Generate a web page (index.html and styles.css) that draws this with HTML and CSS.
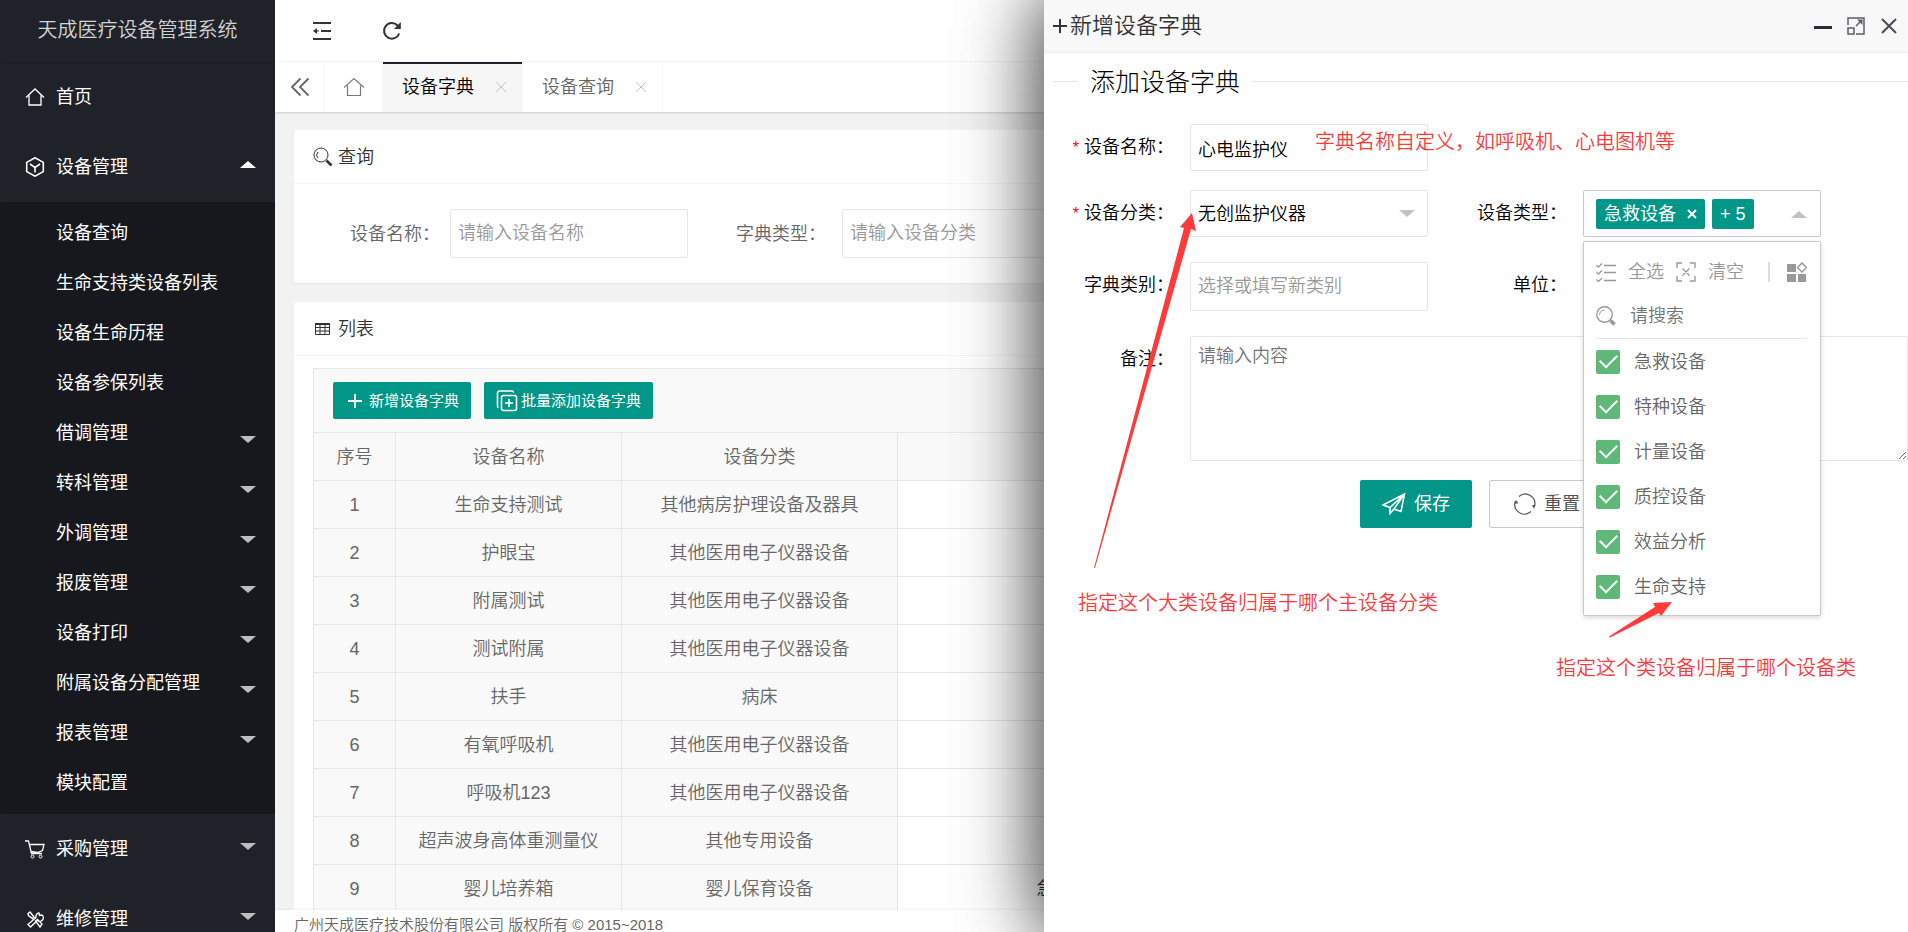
FILE: index.html
```html
<!DOCTYPE html>
<html lang="zh-CN">
<head>
    <meta charset="UTF-8">
    <meta name="viewport" content="width=device-width, initial-scale=1.0">
    <title>天成医疗设备管理系统</title>
    <link rel="stylesheet" href="styles.css">
</head>
<body>
    <aside class="side">
        <div class="logo">天成医疗设备管理系统</div>
        <nav>
            <a class="nav-item" href="#">
                <svg class="nav-icon" viewBox="0 0 20 20"><path d="M1 10.500 10 2l9 8.500M4 8.500V18h12V8.500" stroke-width="1.300"/></svg>
                首页
            </a>
            <a class="nav-item" href="#">
                <svg class="nav-icon" viewBox="0 0 20 20"><path d="M10 .8l8.300 4.600v9.200L10 19.200l-8.300-4.600V5.400zM5 7l5 3.500L15 7M10 10.500V15.500" stroke-width="1.600"/></svg>
                设备管理
                <i class="caret caret-up"></i>
            </a>
            <div class="sub-nav">
                <a href="#">设备查询</a>
                <a href="#">生命支持类设备列表</a>
                <a href="#">设备生命历程</a>
                <a href="#">设备参保列表</a>
                <a href="#">借调管理<i class="caret"></i></a>
                <a href="#">转科管理<i class="caret"></i></a>
                <a href="#">外调管理<i class="caret"></i></a>
                <a href="#">报废管理<i class="caret"></i></a>
                <a href="#">设备打印<i class="caret"></i></a>
                <a href="#">附属设备分配管理<i class="caret"></i></a>
                <a href="#">报表管理<i class="caret"></i></a>
                <a href="#">模块配置</a>
            </div>
            <a class="nav-item" href="#">
                <svg class="nav-icon" viewBox="0 0 20 20"><path d="M0 2h3.500l3 12.500H17M4.500 5.500H19l-1.500 6-5 2-6.300-1" stroke-width="1.300"/><circle cx="7.500" cy="17.500" r="1.500"/><circle cx="15.500" cy="17.500" r="1.500"/></svg>
                采购管理
                <i class="caret"></i>
            </a>
            <a class="nav-item" href="#">
                <svg class="nav-icon" viewBox="0 0 20 20"><path d="M3 4.500l2-1.500 4 5-1.500 1.500L3.500 6.500zM10.500 12l2-1.500 4.500 4.500-2 3zM17 6l-2.500.5L14 4a3.500 3.500 0 0 0-3 4.500L3 15.500l2.500 2.500L12.500 11.500a3.500 3.500 0 0 0 4.500-5.500z" stroke-width="1.400"/></svg>
                维修管理
                <i class="caret"></i>
            </a>
        </nav>
    </aside>

    <main class="main">
        <header class="topbar">
            <button type="button" aria-label="收起菜单">
                <svg width="20" height="20" viewBox="0 0 20 20"><path d="M1 2h18M9 10h10M1 18h18" stroke-width="2"/><path d="M1 10l4-3v6z" fill="#333" stroke="none"/><path d="M5 10h2" /></svg>
            </button>
            <button type="button" aria-label="刷新">
                <svg width="20" height="20" viewBox="0 0 20 20"><path d="M17.200 12.500A7.800 7.800 0 1 1 15.500 4.500L17 6" stroke-width="2"/><path d="M18.800 1V8H12z" fill="#333" stroke="none"/></svg>
            </button>
        </header>
        <div class="tabs">
            <button type="button" class="tab-prev" aria-label="向左">
                <svg width="20" height="20" viewBox="0 0 20 20"><path d="M10.500 1.500 2 10l8.500 8.500M18.500 1.500 10 10l8.500 8.500" stroke-width="1.800"/></svg>
            </button>
            <a class="tab-home" href="#" aria-label="首页">
                <svg width="20" height="20" viewBox="0 0 20 20"><path d="M0 10.500 10 1.500l10 9M3.500 8.500v10h13v-10" stroke="#777" stroke-width="1.200"/></svg>
            </a>
            <a class="tab active" href="#">设备字典
                <svg width="12" height="12" viewBox="0 0 12 12"><path d="M1 1l10 10M11 1 1 11"/></svg>
            </a>
            <a class="tab" href="#">设备查询
                <svg width="12" height="12" viewBox="0 0 12 12"><path d="M1 1l10 10M11 1 1 11"/></svg>
            </a>
        </div>

        <div class="content">
            <section class="card">
                <h2 class="card-title">
                    <svg width="20" height="20" viewBox="0 0 20 20"><circle cx="8" cy="8" r="7"/><path d="M4.500 11A5 5 0 0 1 5 5"/><path d="M13.500 13.500l5 5" stroke-width="2.600"/></svg>
                    查询
                </h2>
                <form class="search">
                    <label for="q-name">设备名称：</label>
                    <input id="q-name" type="text" placeholder="请输入设备名称">
                    <label for="q-type" class="next">字典类型：</label>
                    <input id="q-type" type="text" placeholder="请输入设备分类">
                </form>
            </section>

            <section class="card">
                <h2 class="card-title">
                    <svg width="20" height="20" viewBox="0 0 20 20"><path d="M2.500 4.500h14v11h-14zM2.500 8.500h14M2.500 12h14M7 5v10.500M12 5v10.500"/><path d="M2 5h15" stroke-width="2"/></svg>
                    列表
                </h2>
                <div class="table-box">
                    <div class="toolbar">
                        <button type="button" class="btn-small">
                            <svg width="16" height="16" viewBox="0 0 16 16"><path d="M8 1v14M1 8h14" stroke-width="2"/></svg>
                            新增设备字典
                        </button>
                        <button type="button" class="btn-small">
                            <svg width="22" height="22" viewBox="0 0 22 22"><rect x="5.500" y="5.500" width="15" height="15" rx="2" stroke-width="1.600"/><path d="M2.500 17.500a1.500 1.500 0 0 1-1-1.500V3a2 2 0 0 1 2-2H16a1.500 1.500 0 0 1 1.500 1.500M13 9v8M9 13h8" stroke-width="1.600"/></svg>
                            批量添加设备字典
                        </button>
                    </div>
                    <table>
                        <colgroup>
                            <col class="c-no"><col class="c-name"><col class="c-cate"><col class="c-type">
                        </colgroup>
                        <thead>
                            <tr><th>序号</th><th>设备名称</th><th>设备分类</th><th></th></tr>
                        </thead>
                        <tbody>
                            <tr><td>1</td><td>生命支持测试</td><td>其他病房护理设备及器具</td><td></td></tr>
                            <tr><td>2</td><td>护眼宝</td><td>其他医用电子仪器设备</td><td></td></tr>
                            <tr><td>3</td><td>附属测试</td><td>其他医用电子仪器设备</td><td></td></tr>
                            <tr><td>4</td><td>测试附属</td><td>其他医用电子仪器设备</td><td></td></tr>
                            <tr><td>5</td><td>扶手</td><td>病床</td><td></td></tr>
                            <tr><td>6</td><td>有氧呼吸机</td><td>其他医用电子仪器设备</td><td></td></tr>
                            <tr><td>7</td><td>呼吸机123</td><td>其他医用电子仪器设备</td><td></td></tr>
                            <tr><td>8</td><td>超声波身高体重测量仪</td><td>其他专用设备</td><td></td></tr>
                            <tr><td>9</td><td>婴儿培养箱</td><td>婴儿保育设备</td><td>急救设备</td></tr>
                        </tbody>
                    </table>
                </div>
            </section>
        </div>
        <footer class="footer">广州天成医疗技术股份有限公司 版权所有 © 2015~2018</footer>
    </main>

    <div class="drawer">
        <div class="drawer-head">
            <svg width="16" height="16" viewBox="0 0 16 16"><path d="M8 1v14M1 8h14" stroke-width="2"/></svg>
            <span class="drawer-title">新增设备字典</span>
            <button type="button" aria-label="最小化">
                <svg width="18" height="18" viewBox="0 0 18 18"><path d="M0 10.500h18" stroke="#2e2d3c" stroke-width="3"/></svg>
            </button>
            <button type="button" aria-label="最大化">
                <svg width="18" height="18" viewBox="0 0 18 18"><path d="M1 8V1h16v16H9M1 11h6v6H1zM9 9l6-6" stroke="#5d5c6a" stroke-width="1.500"/><path d="M10 2.500h5.500V8z" fill="#5d5c6a" stroke="none"/></svg>
            </button>
            <button type="button" aria-label="关闭">
                <svg width="18" height="18" viewBox="0 0 18 18"><path d="M2 2l14 14M16 2 2 16" stroke="#4c4b5a" stroke-width="2"/></svg>
            </button>
        </div>

        <form class="drawer-body">
            <h1 class="legend">添加设备字典</h1>
            <div class="row">
                <label for="f-name"><b>*</b>设备名称：</label>
                <input id="f-name" type="text" value="心电监护仪">
            </div>
            <div class="row">
                <label for="f-cate"><b>*</b>设备分类：</label>
                <div class="select">
                    <select id="f-cate"><option>无创监护仪器</option></select>
                    <i class="caret"></i>
                </div>
                <label for="f-type" class="second">设备类型：</label>
                <div class="multi">
                    <button type="button" id="f-type" class="tag">急救设备
                        <svg width="10" height="10" viewBox="0 0 10 10"><path d="M1 1l8 8M9 1 1 9" stroke-width="2"/></svg>
                    </button>
                    <span class="tag">+ 5</span>
                    <i class="caret caret-up"></i>

                    <div class="dropdown">
                        <div class="tools">
                            <button type="button">
                                <svg width="20" height="20" viewBox="0 0 20 20"><path d="M8 3.500h12M8 10.500h12M8 18.500h12" stroke-width="1.500"/><path d="M.5 3 2.500 5 6 1.500M.5 10 2.500 12 6 8.500M.5 17.500l2 2L6 16" stroke-width="1.300"/></svg>
                                全选
                            </button>
                            <button type="button">
                                <svg width="20" height="20" viewBox="0 0 20 20"><path d="M6 1H1v5M14 1h5v5M6 19H1v-5M14 19h5v-5M6.500 6.500l7 7M13.500 6.500l-7 7" stroke-width="1.400"/></svg>
                                清空
                            </button>
                            <button type="button" class="mode" aria-label="切换">
                                <svg width="20" height="20" viewBox="0 0 20 20"><path d="M0 2h9v8H0zM0 12h9v8H0zM11 12h8v8h-8z" fill="#999" stroke="none"/><path d="M15 1 19.500 5.500 15 10 10.500 5.500z" stroke-width="1.500"/></svg>
                            </button>
                        </div>
                        <div class="find">
                            <svg width="20" height="20" viewBox="0 0 20 20"><circle cx="8.500" cy="8.500" r="7.800" stroke-width="1.400"/><path d="M3.500 9a5 5 0 0 1 5-5"/><path d="M14.500 14.500l4 4" stroke-width="3.800"/></svg>
                            <input type="text" placeholder="请搜索" aria-label="请搜索">
                        </div>
                        <label class="opt"><input type="checkbox" checked>急救设备</label>
                        <label class="opt"><input type="checkbox" checked>特种设备</label>
                        <label class="opt"><input type="checkbox" checked>计量设备</label>
                        <label class="opt"><input type="checkbox" checked>质控设备</label>
                        <label class="opt"><input type="checkbox" checked>效益分析</label>
                        <label class="opt"><input type="checkbox" checked>生命支持</label>
                    </div>
                </div>
            </div>
            <div class="row spaced">
                <label for="f-kind">字典类别：</label>
                <input id="f-kind" type="text" placeholder="选择或填写新类别">
                <label for="f-unit" class="second">单位：</label>
                <input id="f-unit" type="text">
            </div>
            <div class="row spaced">
                <label for="f-note">备注：</label>
                <textarea id="f-note" placeholder="请输入内容"></textarea>
            </div>
            <div class="actions">
                <button type="button" class="btn">
                    <svg width="24" height="22" viewBox="0 0 24 22"><path d="M1 12 22.500 1 19 18.500 12 16 22 1.500 8 14.500zM8 14.500V20.500L12 16" stroke-width="1.600"/></svg>
                    保存
                </button>
                <button type="reset" class="btn btn-plain">
                    <svg width="22" height="22" viewBox="0 0 22 22"><path d="M5 3.500A9.500 9.500 0 0 1 20.500 13M17 18.500a9.500 9.500 0 0 1-4 2M15.500 19.500A9.500 9.500 0 0 1 1.500 8" stroke-width="1.200"/><path d="M18 12h3.500l-1.500 4zM.5 10.500 2 7l2.500 3.500z" fill="#555" stroke="none"/></svg>
                    重置
                </button>
            </div>
        </form>

        <!-- notes over the form -->
        <svg class="arrow arrow-long" viewBox="0 0 104 356"><path d="M98 0l4 18-5-2L1 355 0 355 90 15l-4-1z"/></svg>
        <svg class="arrow arrow-short" viewBox="0 0 64 36"><path d="M63 0 52 14l-2-3L1 35.500 0 34.500 46 5l-2-4z"/></svg>
        <p class="note note-name">字典名称自定义，如呼吸机、心电图机等</p>
        <p class="note note-cate">指定这个大类设备归属于哪个主设备分类</p>
        <p class="note note-type">指定这个类设备归属于哪个设备类</p>
    </div>
</body>
</html>
```
FILE: styles.css
```css
* {
    box-sizing: border-box;
}
body {
    margin: 0;
    height: 100vh;
    display: flex;
    overflow: hidden;
    background-color: #f2f2f2;
    color: #666;
    font-family: "Liberation Sans", "Noto Sans CJK SC", sans-serif;
    font-size: 18px;
    font-weight: 350;
    line-height: 24px;
}
a {
    color: inherit;
    text-decoration: none;
}
button, input, select, textarea {
    font: inherit;
    color: inherit;
}
button {
    padding: 0;
    border: 0;
    background: none;
    cursor: pointer;
}
svg {
    flex: none;
    display: block;
    fill: none;
    stroke: currentColor;
}
.caret {
    border: 8px solid transparent;
    border-top: 7px solid #c2c2c2;
    border-bottom: 0;
}
.caret-up {
    border-top: 0;
    border-bottom: 7px solid #c2c2c2;
}

/* sidebar */
.side {
    flex: none;
    width: 275px;
    overflow: hidden;
    background-color: #20222a;
    color: #fff;
    font-weight: 400;
}
.logo {
    height: 62px;
    line-height: 61px;
    text-align: center;
    font-size: 20px;
    font-weight: 350;
    color: #d2d3d4;
    box-shadow: 0 1px 2px rgba(0, 0, 0, .15);
}
.nav-item {
    display: flex;
    align-items: center;
    height: 70px;
    padding: 0 19px 0 25px;
}
.nav-icon {
    width: 20px;
    height: 20px;
    margin-right: 11px;
}
.side .caret {
    margin-left: auto;
    border-top-color: #bcbdbf;
}
.side .caret-up {
    border-bottom-color: #fff;
}
.nav-item .caret {
    margin-bottom: 6px;
}
.sub-nav {
    padding: 6px 0;
    background-color: #17181d;
    border-radius: 2px;
}
.sub-nav a {
    display: flex;
    align-items: center;
    height: 50px;
    padding: 0 19px 0 56px;
}
.sub-nav .caret {
    margin-top: 12px;
}

/* page */
.main {
    flex: 1;
    min-width: 0;
    display: flex;
    flex-direction: column;
}
.topbar {
    flex: none;
    display: flex;
    align-items: center;
    gap: 50px;
    height: 62px;
    padding: 0 37px;
    background-color: #fff;
    border-bottom: 1px solid #f6f6f6;
    color: #333;
}
.tabs {
    flex: none;
    display: flex;
    height: 50px;
    background-color: #fff;
    box-shadow: 0 1px 2px rgba(0, 0, 0, .15);
}
.tab-prev, .tab-home, .tab {
    display: flex;
    align-items: center;
    justify-content: center;
    border-right: 1px solid #f6f6f6;
}
.tab-prev {
    width: 50px;
}
.tab-home {
    width: 58px;
}
.tab {
    justify-content: space-between;
    width: 140px;
    padding: 0 15px 0 19px;
}
.tab svg {
    color: #c2c2c2;
}
.tab.active {
    background-color: #f6f6f6;
    color: #000;
    box-shadow: inset 0 2px #20222a;
}
.content {
    flex: 1;
    min-height: 0;
    overflow: hidden;
    padding: 18px 19px;
}
.card {
    margin-bottom: 19px;
    background-color: #fff;
    border-radius: 3px;
    box-shadow: 0 1px 2px rgba(0, 0, 0, .05);
}
.card-title {
    display: flex;
    align-items: center;
    gap: 5px;
    height: 54px;
    margin: 0;
    padding: 0 19px;
    border-bottom: 1px solid #f6f6f6;
    font-size: 18px;
    font-weight: 350;
    color: #333;
}
.search {
    display: grid;
    grid-template-columns: 100px 238px 154px 238px;
    align-items: center;
    padding: 25px 56px;
}
.search .next {
    padding-left: 48px;
}
input[type="text"], select, textarea {
    width: 238px;
    height: 49px;
    padding: 0 7px;
    border: 1px solid #e6e6e6;
    border-radius: 2px;
    background-color: #fff;
    outline: none;
}
input::placeholder {
    color: #999;
}
.table-box {
    margin: 12px 19px 0;
    border: 1px solid #e6e6e6;
    overflow: hidden;
}
.toolbar {
    display: flex;
    gap: 13px;
    padding: 13px 19px;
    height: 64px;
    background-color: #f9f9f9;
    border-bottom: 1px solid #e6e6e6;
}
.btn-small {
    display: flex;
    align-items: center;
    gap: 3px;
    height: 37px;
    padding: 0 12px;
    border-radius: 2px;
    background-color: #009688;
    color: #fff;
    font-size: 15px;
    font-weight: 400;
}
.btn-small:first-child {
    gap: 6px;
    padding-left: 14px;
}
table {
    width: 934px;
    table-layout: fixed;
    border-spacing: 0;
}
.c-no {
    width: 82px;
}
.c-name {
    width: 226px;
}
.c-cate {
    width: 276px;
}
.c-type {
    width: 350px;
}
th, td {
    height: 48px;
    padding: 0;
    border-right: 1px solid #e6e6e6;
    border-bottom: 1px solid #e6e6e6;
    text-align: center;
    font-weight: 350;
    background-color: #f9f9f9;
}
td:nth-child(4) {
    background-color: #fff;
    color: #333;
}
.footer {
    flex: none;
    height: 22px;
    padding: 6px 19px 0;
    line-height: 18px;
    background-color: #fff;
    box-shadow: 0 -1px 2px rgba(0, 0, 0, .05);
    font-size: 15px;
}

/* drawer */
.drawer {
    position: absolute;
    top: 0;
    right: 0;
    bottom: 0;
    width: 864px;
    max-width: 100%;
    background-color: #fff;
    color: #000;
    box-shadow: 0 0 80px rgba(0, 0, 0, .35), 0 0 80px rgba(0, 0, 0, .35), 0 0 60px rgba(0, 0, 0, .35);
}
.drawer-head {
    display: flex;
    align-items: center;
    gap: 15px;
    height: 53px;
    padding: 0 10px 0 8px;
    background-color: #f8f8f8;
    border-bottom: 1px solid #eee;
    color: #333;
    font-size: 22px;
}
.drawer-title {
    flex: 1;
    margin-left: -13px;
}
.drawer-body {
    padding: 10px 0 0 9px;
}
.legend {
    display: flex;
    align-items: center;
    gap: 12px;
    height: 37px;
    margin: 0 0 24px;
    font-size: 25px;
    font-weight: 300;
}
.legend::before, .legend::after {
    content: "";
    width: 25px;
    height: 1px;
    background-color: #e6e6e6;
}
.legend::after {
    flex: 1;
}
.row {
    display: flex;
    margin-bottom: 19px;
}
.row > label {
    flex: none;
    width: 137px;
    padding-right: 16px;
    line-height: 47px;
    text-align: right;
}
.row > label.second {
    width: 155px;
}
.row b {
    margin-right: 5px;
    color: #f00;
    font-size: 16px;
    font-weight: 400;
}
.row input[type="text"], .row select {
    height: 47px;
}
.row.spaced {
    margin: 25px 0 0;
}
.row.spaced input[type="text"] {
    height: 49px;
}
.row textarea {
    flex: 1;
    height: 125px;
    padding: 7px;
}
.select {
    position: relative;
}
.select select {
    appearance: none;
}
.select .caret, .multi > .caret {
    position: absolute;
    top: 20px;
    right: 13px;
}
.multi {
    position: relative;
    display: flex;
    align-items: center;
    gap: 7px;
    width: 238px;
    height: 47px;
    padding-left: 12px;
    border: 1px solid #c9c9c9;
    border-radius: 2px;
}
.tag {
    display: flex;
    align-items: center;
    gap: 11px;
    height: 30px;
    padding: 0 8px;
    border-radius: 2px;
    background-color: #009688;
    color: #fff;
    font-weight: 400;
}
.dropdown {
    position: absolute;
    top: 50px;
    left: -1px;
    z-index: 1;
    width: 238px;
    height: 375px;
    padding: 8px 13px 0 12px;
    border: 1px solid #c9c9c9;
    border-radius: 2px;
    background-color: #fff;
    box-shadow: 0 2px 5px rgba(0, 0, 0, .15);
    color: #666;
}
.tools {
    display: flex;
    gap: 12px;
    height: 44px;
    color: #999;
}
.tools button {
    display: flex;
    align-items: center;
    gap: 12px;
}
.tools .mode {
    align-self: center;
    height: 20px;
    margin-left: auto;
    padding-left: 17px;
    border-left: 2px solid #ddd;
}
.find {
    display: flex;
    align-items: center;
    height: 45px;
    border-bottom: 1px solid #e6e6e6;
    color: #999;
}
.row .find input[type="text"] {
    width: 180px;
    height: 40px;
    padding: 0 14px;
    border: 0;
}
.find input::placeholder {
    color: #757575;
}
.opt {
    display: flex;
    align-items: center;
    gap: 14px;
    height: 45px;
}
.opt input {
    appearance: none;
    display: flex;
    align-items: center;
    justify-content: center;
    width: 24px;
    height: 24px;
    margin: 0;
    border-radius: 2px;
    background-color: #5fb878;
}
.opt input:checked::after {
    content: "";
    width: 15px;
    height: 8px;
    margin-bottom: 6px;
    border: solid #fff;
    border-width: 0 0 2px 2px;
    transform: rotate(-45deg);
}
.actions {
    display: flex;
    justify-content: center;
    gap: 17px;
    margin-top: 19px;
}
.btn {
    display: flex;
    align-items: center;
    gap: 8px;
    height: 48px;
    padding: 0 22px;
    border-radius: 2px;
    background-color: #009688;
    color: #fff;
    font-weight: 400;
}
.btn-plain {
    padding: 0 20px 0 24px;
    border: 1px solid #c9c9c9;
    background-color: #fff;
    color: #555;
}

/* notes */
.arrow {
    position: absolute;
    z-index: 2;
    fill: #fe3a3a;
    stroke: none;
}
.arrow-long {
    top: 213px;
    left: 50px;
    width: 104px;
}
.arrow-short {
    top: 602px;
    left: 565px;
    width: 64px;
}
.note {
    position: absolute;
    z-index: 2;
    margin: 0;
    line-height: 24px;
    font-size: 20px;
    color: #fe3a3a;
    white-space: nowrap;
}
.note-name {
    top: 130px;
    left: 271px;
}
.note-cate {
    top: 591px;
    left: 34px;
}
.note-type {
    top: 656px;
    left: 512px;
}
```
